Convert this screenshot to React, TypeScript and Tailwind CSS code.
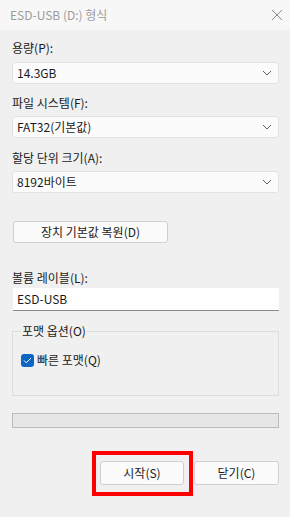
import React from "react";

const font = { fontFamily: '"Noto Sans CJK KR", "Noto Sans", sans-serif' };

function Chevron() {
  return (
    <svg width="10" height="6" viewBox="0 0 10 6" className="shrink-0">
      <path d="M1 1 L5 5 L9 1" fill="none" stroke="#606060" strokeWidth="1" />
    </svg>
  );
}

function Select({ value }: { value: string }) {
  return (
    <div className="h-[22px] bg-[#fbfbfb] border border-[#e2e2e2] rounded-[3px] flex items-center justify-between pl-[4px] pr-[6px] text-[12px] text-[#1a1a1a]">
      <span>{value}</span>
      <Chevron />
    </div>
  );
}

function Label({ text, mt }: { text: string; mt: string }) {
  return <div className={`${mt} h-[16px] leading-[16px] text-[12px] text-[#1a1a1a]`}>{text}</div>;
}

export default function App() {
  return (
    <div className="w-[290px] h-[517px] bg-[#f0f0f0] flex flex-col overflow-hidden" style={font}>
      <div className="h-[30px] bg-[#f7f7f7] flex items-center justify-between pl-[10px] pr-[7px]">
        <span className="text-[12px] text-[#9b9b9b]">ESD-USB (D:) 형식</span>
        <svg width="12" height="12" viewBox="0 0 12 12">
          <path d="M1 1 L11 11 M11 1 L1 11" stroke="#8a8a8a" strokeWidth="1" />
        </svg>
      </div>
      <div className="px-[12px] pr-[11px] flex flex-col">
        <Label text="용량(P):" mt="mt-[10px]" />
        <div className="mt-[6px]"><Select value="14.3GB" /></div>
        <Label text="파일 시스템(F):" mt="mt-[11px]" />
        <div className="mt-[5px]"><Select value="FAT32(기본값)" /></div>
        <Label text="할당 단위 크기(A):" mt="mt-[12px]" />
        <div className="mt-[5px]"><Select value="8192바이트" /></div>
        <div className="mt-[28px] ml-[1px] w-[155px] h-[22px] bg-[#fbfbfb] border border-[#d0d0d0] rounded-[3px] flex items-center justify-center text-[12px] text-[#1a1a1a]">
          장치 기본값 복원(D)
        </div>
        <Label text="볼륨 레이블(L):" mt="mt-[27px]" />
        <div className="mt-[2px] h-[23px] bg-white border-b border-[#8a8a8a] flex items-center pl-[4px] text-[12px] text-[#1a1a1a] ml-[1px]">
          ESD-USB
        </div>
        <div className="mt-[20px] h-[65px] border border-[#dcdcdc] relative">
          <span className="absolute left-[8px] top-[-9px] px-[1px] bg-[#f0f0f0] text-[12px] leading-[16px] text-[#1a1a1a]">포맷 옵션(O)</span>
          <div className="mt-[20px] ml-[8px] flex items-center gap-[3px]">
            <div className="w-[13px] h-[13px] rounded-[3px] bg-[#0b66c3] flex items-center justify-center">
              <svg width="9" height="7" viewBox="0 0 9 7">
                <path d="M1 3.5 L3.3 5.8 L8 1" fill="none" stroke="white" strokeWidth="1" />
              </svg>
            </div>
            <span className="text-[12px] leading-[16px] text-[#1a1a1a]">빠른 포맷(Q)</span>
          </div>
        </div>
        <div className="mt-[17px] h-[15px] bg-[#e6e6e6] border border-[#bcbcbc]" />
        <div className="mt-[33px] flex justify-end gap-[10px]">
          <div className="relative">
            <div className="absolute left-[-8px] right-[-9px] top-[-10px] bottom-[-11px] border-[4px] border-[#ff0000]" />
            <div className="w-[84px] h-[24px] bg-[#fbfbfb] border border-[#d0d0d0] rounded-[3px] flex items-center justify-center text-[12px] text-[#1a1a1a]">
              시작(S)
            </div>
          </div>
          <div className="w-[85px] h-[24px] bg-[#fbfbfb] border border-[#d0d0d0] rounded-[3px] flex items-center justify-center text-[12px] text-[#1a1a1a]">
            닫기(C)
          </div>
        </div>
      </div>
    </div>
  );
}
